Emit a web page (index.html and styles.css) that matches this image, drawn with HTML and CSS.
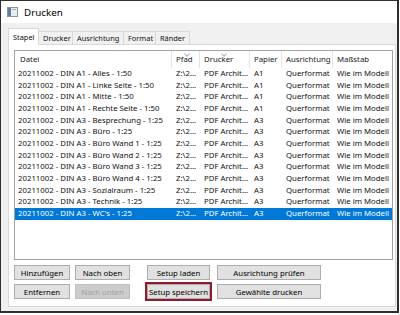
FILE: index.html
```html
<!DOCTYPE html>
<html lang="de">
<head>
    <meta charset="UTF-8">
    <title>Drucken</title>
    <link rel="stylesheet" href="styles.css">
</head>
<body>
    <div class="window">
        <div class="titlebar">
            <svg class="app-icon" width="11" height="10" viewBox="0 0 11 10">
                <rect x="0.5" y="0.5" width="10" height="9" fill="#e8ecef" stroke="#8a96a0"/>
                <rect x="1" y="1" width="3" height="8" fill="#5a7fa0"/>
                <rect x="5" y="2" width="4" height="1" fill="#9fb0bd"/>
            </svg>
            <span class="title">Drucken</span>
        </div>
        <div class="client">
            <div class="tabstrip">
                <div class="tab active t-stapel">Stapel</div>
                <div class="tab t-drucker">Drucker</div>
                <div class="tab t-ausr">Ausrichtung</div>
                <div class="tab t-format">Format</div>
                <div class="tab t-raender">Ränder</div>
            </div>
            <div class="tabpage">
                <div class="listview">
                    <div class="lv-row lv-head">
                        <div class="cell">Datei</div>
                        <div class="cell sorted">Pfad</div>
                        <div class="cell sorted">Drucker</div>
                        <div class="cell">Papier</div>
                        <div class="cell">Ausrichtung</div>
                        <div class="cell">Maßstab</div>
                    </div>
                    <div id="rows"></div>
                </div>
                <div class="buttons">
                    <div class="btn-row">
                        <button class="btn b1">Hinzufügen</button>
                        <button class="btn b2">Nach oben</button>
                        <button class="btn b3">Setup laden</button>
                        <button class="btn b4">Ausrichtung prüfen</button>
                    </div>
                    <div class="btn-row">
                        <button class="btn b1">Entfernen</button>
                        <button class="btn b2" disabled>Nach unten</button>
                        <button class="btn b3 marked">Setup speichern</button>
                        <button class="btn b4">Gewählte drucken</button>
                    </div>
                </div>
            </div>
        </div>
    </div>

    <script>
        const files = [
            ["DIN A1 - Alles - 1:50", "A1"],
            ["DIN A1 - Linke Seite - 1:50", "A1"],
            ["DIN A1 - Mitte - 1:50", "A1"],
            ["DIN A1 - Rechte Seite - 1:50", "A1"],
            ["DIN A3 - Besprechung - 1:25", "A3"],
            ["DIN A3 - Büro - 1:25", "A3"],
            ["DIN A3 - Büro Wand 1 - 1:25", "A3"],
            ["DIN A3 - Büro Wand 2 - 1:25", "A3"],
            ["DIN A3 - Büro Wand 3 - 1:25", "A3"],
            ["DIN A3 - Büro Wand 4 - 1:25", "A3"],
            ["DIN A3 - Sozialraum - 1:25", "A3"],
            ["DIN A3 - Technik - 1:25", "A3"],
            ["DIN A3 - WC's - 1:25", "A3"]
        ];

        const rows = document.getElementById('rows');
        files.forEach((f, i) => {
            const row = document.createElement('div');
            row.className = 'lv-row';
            if (i === files.length - 1) row.classList.add('selected');
            const cells = ["20211002 - " + f[0], "Z:\\2...", "PDF Archit...", f[1], "Querformat", "Wie im Modell"];
            cells.forEach(text => {
                const cell = document.createElement('div');
                cell.className = 'cell';
                cell.textContent = text;
                row.appendChild(cell);
            });
            rows.appendChild(row);
        });
    </script>
</body>
</html>
```

FILE: styles.css
```css
* {
    box-sizing: border-box;
    margin: 0;
    padding: 0;
}

body {
    background: #fff;
    font-family: "Noto Sans", "Liberation Sans", sans-serif;
    font-size: 7.8px;
    color: #111;
}

.window {
    width: 399px;
    height: 313px;
    border: 1px solid #2e2e2e;
    border-width: 1px 2px 2px 1px;
    display: flex;
    flex-direction: column;
    background: #f0f0f0;
}

.titlebar {
    height: 22px;
    background: #fff;
    display: flex;
    align-items: center;
    padding-left: 6px;
    gap: 6px;
}

.title {
    font-size: 9.8px;
    color: #000;
}

.client {
    flex: 1;
    display: flex;
    flex-direction: column;
    padding: 0 1px 4px 7px;
}

/* --- Reiter --- */
.tabstrip {
    display: flex;
    align-items: flex-end;
    height: 21px;
    padding-top: 5px;
}

.tab {
    height: 13px;
    border: 1px solid #d9d9d9;
    border-bottom: none;
    margin-left: -1px;
    padding-left: 4px;
    line-height: 12px;
    background: #f0f0f0;
    white-space: nowrap;
    font-size: 7.4px;
}

.tab.active {
    height: 17px;
    background: #fff;
    padding-left: 4px;
    margin-left: 0;
    position: relative;
    top: 1px;
    line-height: 16px;
    z-index: 1;
}

.t-stapel { width: 31px; }
.t-drucker { width: 35px; }
.t-ausr { width: 52px; }
.t-format { width: 33px; }
.t-raender { width: 35px; }

.tabpage {
    flex: 1;
    background: #fff;
    border: 1px solid #d9d9d9;
    padding: 5px 2px 0 5px;
}

/* --- Liste --- */
.listview {
    height: 210px;
    border: 1px solid #a3a3a3;
}

.lv-row {
    display: grid;
    grid-template-columns: 157px 28px 50px 32px 51px 1fr;
    height: 11.67px;
    line-height: 11.67px;
}

.lv-row .cell {
    white-space: nowrap;
    overflow: hidden;
    padding-left: 4px;
}

.lv-row .cell:first-child {
    padding-left: 3px;
}

.lv-head {
    height: 17px;
    line-height: 17px;
    color: #1a1a1a;
}

.lv-head .cell {
    border-right: 1px solid #e5e5e5;
    position: relative;
}

.lv-head .cell:first-child {
    padding-left: 5px;
}

.lv-head .cell:last-child {
    border-right: none;
}

.lv-head .sorted::before {
    content: "";
    position: absolute;
    top: 1px;
    left: 13px;
    width: 3px;
    height: 3px;
    border-right: 1px solid #b0b0b0;
    border-bottom: 1px solid #b0b0b0;
    transform: rotate(45deg);
}

.lv-head .cell:nth-child(3)::before {
    left: 22px;
}

.lv-row.selected {
    background: #0078d7;
    color: #fff;
}

/* --- Schaltflächen --- */
.buttons {
    display: flex;
    flex-direction: column;
    gap: 4px;
    margin-top: 5px;
}

.btn-row {
    display: flex;
}

.btn {
    height: 15px;
    font: inherit;
    background: #e1e1e1;
    border: 1px solid #adadad;
    color: #000;
    white-space: nowrap;
}

.btn:disabled {
    color: #a0a0a0;
    background: #cccccc;
    border-color: #bfbfbf;
}

.b1 { width: 56px; }
.b2 { width: 55px; margin-left: 5px; }
.b3 { width: 63px; margin-left: 17px; }
.b4 { width: 104px; margin-left: 7px; }

.btn.marked {
    outline: 2px solid #8e1b2e;
    outline-offset: 0;
}
```
